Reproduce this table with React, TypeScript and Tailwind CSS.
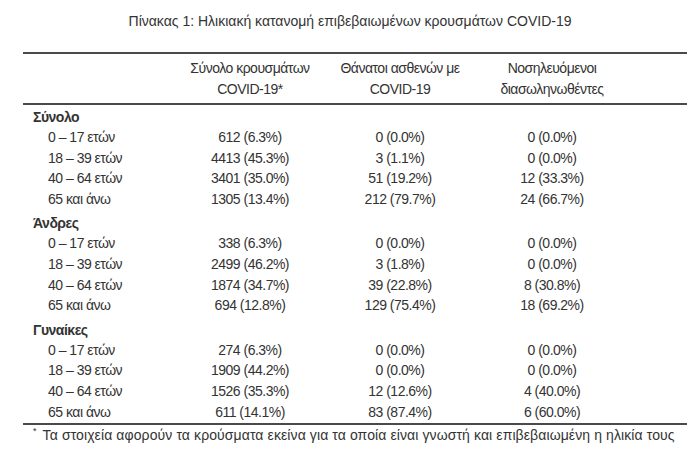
const GROUPS = [
  {
    name: "Σύνολο",
    rows: [
      ["0 – 17 ετών", "612 (6.3%)", "0 (0.0%)", "0 (0.0%)"],
      ["18 – 39 ετών", "4413 (45.3%)", "3 (1.1%)", "0 (0.0%)"],
      ["40 – 64 ετών", "3401 (35.0%)", "51 (19.2%)", "12 (33.3%)"],
      ["65 και άνω", "1305 (13.4%)", "212 (79.7%)", "24 (66.7%)"],
    ],
  },
  {
    name: "Άνδρες",
    rows: [
      ["0 – 17 ετών", "338 (6.3%)", "0 (0.0%)", "0 (0.0%)"],
      ["18 – 39 ετών", "2499 (46.2%)", "3 (1.8%)", "0 (0.0%)"],
      ["40 – 64 ετών", "1874 (34.7%)", "39 (22.8%)", "8 (30.8%)"],
      ["65 και άνω", "694 (12.8%)", "129 (75.4%)", "18 (69.2%)"],
    ],
  },
  {
    name: "Γυναίκες",
    rows: [
      ["0 – 17 ετών", "274 (6.3%)", "0 (0.0%)", "0 (0.0%)"],
      ["18 – 39 ετών", "1909 (44.2%)", "0 (0.0%)", "0 (0.0%)"],
      ["40 – 64 ετών", "1526 (35.3%)", "12 (12.6%)", "4 (40.0%)"],
      ["65 και άνω", "611 (14.1%)", "83 (87.4%)", "6 (60.0%)"],
    ],
  },
]

const COLS = "grid grid-cols-[152px_150px_150px_154px_1fr]"

export default function App() {
  return (
    <div className="h-[464px] w-[700px] bg-white font-['Liberation_Sans',Arial,sans-serif] text-[14px] tracking-[-0.5px] text-[#333333]">
      <div className="pt-[11px] text-center leading-[20px] tracking-[0px]">
        Πίνακας 1: Ηλικιακή κατανομή επιβεβαιωμένων κρουσμάτων COVID-19
      </div>

      <div className="mx-[23px] mt-[21px] w-[664px]">
        <div className="h-[2px] bg-[#4a4a4a]" />
        <div className={`${COLS} pt-[4px] pb-[3px] text-center leading-[21px]`}>
          <div />
          <div>Σύνολο κρουσμάτων<br />COVID-19*</div>
          <div>Θάνατοι ασθενών με<br />COVID-19</div>
          <div>Νοσηλευόμενοι<br />διασωληνωθέντες</div>
          <div />
        </div>
        <div className="h-[2px] bg-[#4a4a4a]" />

        <div className="pt-[2px] pb-[1px]">
          {GROUPS.map((g, gi) => (
            <div key={g.name} className={gi > 0 ? "mt-[4px]" : ""}>
              <div className="flex font-bold leading-[20px]">
                <div className="w-[10px] shrink-0" />
                <div>{g.name}</div>
              </div>
              {g.rows.map((r) => (
                <div key={r[0]} className={`${COLS} leading-[20.6px]`}>
                  <div className="flex">
                    <div className="w-[25px] shrink-0" />
                    <div>{r[0]}</div>
                  </div>
                  <div className="text-center">{r[1]}</div>
                  <div className="text-center">{r[2]}</div>
                  <div className="text-center">{r[3]}</div>
                  <div />
                </div>
              ))}
            </div>
          ))}
        </div>

        <div className="h-[2px] bg-[#4a4a4a]" />
        <div className="flex leading-[20px] tracking-[0.1px]">
          <div className="w-[10px] shrink-0" />
          <span className="mr-[6px] text-[9px] leading-[12px]">*</span>
          <span>Τα στοιχεία αφορούν τα κρούσματα εκείνα για τα οποία είναι γνωστή και επιβεβαιωμένη η ηλικία τους</span>
        </div>
      </div>
    </div>
  )
}
